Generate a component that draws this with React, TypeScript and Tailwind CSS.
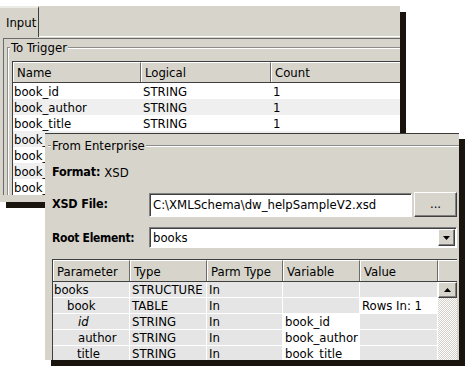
import React from "react";

const raised =
  "border border-t-white border-l-white border-r-[#404040] border-b-[#404040] shadow-[inset_-1px_-1px_0_#808080]";
const sunken =
  "border border-t-[#808080] border-l-[#808080] border-r-white border-b-white shadow-[inset_1px_1px_0_#404040]";

function BackWindow() {
  const rows = [
    ["book_id", "STRING", "1"],
    ["book_author", "STRING", "1"],
    ["book_title", "STRING", "1"],
    ["book_", "", ""],
    ["book_", "", ""],
    ["book_", "", ""],
    ["book_", "", ""],
  ];
  return (
    <div className="absolute left-0 top-[6px] w-[400px] h-[196px] bg-[#d7d4cb] shadow-[6px_6px_0_#1a140e]">
      <div className="w-[400px] h-[196px] overflow-hidden">
        {/* tab strip */}
        <div className="flex h-[31px]">
          <div className="w-[39px] h-[31px] border-t-2 border-t-[#ecebe6] border-r border-r-[#404040] pl-[6px] pt-[8px]">
            Input
          </div>
          <div className="flex-1 border-b border-white" />
        </div>
        {/* tab panel */}
        <div className="ml-[3px] mt-[1px] border-t border-l border-[#6a6a6a]">
          {/* group box */}
          <div className="relative ml-[3px] mt-[8px] border-t border-l border-[#8c8c8c] shadow-[inset_1px_1px_0_#ffffff]">
            <div className="absolute left-[2px] top-[-7px] bg-[#d7d4cb] px-[1px] leading-[14px]">
              To Trigger
            </div>
            <div className="ml-[4px] mt-[13px] border-l border-t border-[#404040]">
              {/* header */}
              <div className="flex h-[21px] border-b border-[#404040]">
                <div className="w-[128px] pl-[3px] flex items-center border-t border-l border-white border-r border-r-[#6b6b6b]">
                  Name
                </div>
                <div className="w-[130px] pl-[3px] flex items-center border-t border-l border-white border-r border-r-[#6b6b6b]">
                  Logical
                </div>
                <div className="flex-1 pl-[3px] flex items-center border-t border-l border-white">
                  Count
                </div>
              </div>
              {rows.map((r, i) => (
                <div
                  key={i}
                  className={`flex h-[16px] items-center ${i % 2 === 1 ? "bg-[#efefef]" : "bg-white"}`}
                >
                  <div className="w-[128px] pl-[1px]">{r[0]}</div>
                  <div className="w-[130px] pl-[2px]">{r[1]}</div>
                  <div className="flex-1 pl-[2px]">{r[2]}</div>
                </div>
              ))}
            </div>
          </div>
        </div>
      </div>
    </div>
  );
}

type Cell = { text: string; white?: boolean; italic?: boolean; indent?: number };

function FrontWindow() {
  const widths = ["w-[77px]", "w-[77px]", "w-[76px]", "w-[77px]", "w-[78px]"];
  const headers = ["Parameter", "Type", "Parm Type", "Variable", "Value"];
  const rows: Cell[][] = [
    [{ text: "books", indent: 0 }, { text: "STRUCTURE" }, { text: "In" }, { text: "" }, { text: "" }],
    [{ text: "book", indent: 14 }, { text: "TABLE" }, { text: "In" }, { text: "" }, { text: "Rows In: 1", white: true }],
    [{ text: "id", indent: 25, italic: true }, { text: "STRING" }, { text: "In" }, { text: "book_id", white: true }, { text: "" }],
    [{ text: "author", indent: 25 }, { text: "STRING" }, { text: "In" }, { text: "book_author", white: true }, { text: "" }],
    [{ text: "title", indent: 24 }, { text: "STRING" }, { text: "In" }, { text: "book_title", white: true }, { text: "" }],
  ];
  const indentCls: Record<number, string> = {
    0: "pl-[1px]",
    14: "pl-[14px]",
    24: "pl-[24px]",
    25: "pl-[25px]",
  };
  return (
    <div className="absolute left-[45px] top-[133px] w-[414px] h-[227px] bg-[#d7d4cb] shadow-[6px_6px_0_#1a140e]">
      <div className="w-[414px] h-[227px] overflow-hidden border-t border-[#3a3a3a]">
        {/* group title */}
        <div className="relative ml-[3px] mt-[11px] border-t border-[#8c8c8c] shadow-[0_1px_0_#ffffff]">
          <div className="absolute left-[3px] top-[-7px] bg-[#d7d4cb] px-[1px] leading-[14px]">
            From Enterprise
          </div>
        </div>
        <div className="pl-[7px]">
          <div className="mt-[19px] h-[14px] flex items-center">
            <span className="font-bold text-[12.5px] tracking-[-0.2px]">Format:</span>
            <span className="ml-[4px]">XSD</span>
          </div>
          <div className="mt-[13px] flex items-center h-[25px]">
            <div className="w-[97px] font-bold text-[12.5px] tracking-[-0.2px]">XSD File:</div>
            <div className={`w-[263px] h-[24px] bg-white flex items-center pl-[3px] ${sunken}`}>
              C:\XMLSchema\dw_helpSampleV2.xsd
            </div>
            <div className={`ml-[2px] w-[43px] h-[25px] bg-[#d7d4cb] flex items-center justify-center pb-[2px] ${raised}`}>
              ...
            </div>
          </div>
          <div className="mt-[10px] flex items-center h-[21px]">
            <div className="w-[97px] font-bold text-[12px] tracking-[-0.3px]">Root Element:</div>
            <div className={`w-[308px] h-[21px] bg-white flex items-center ${sunken}`}>
              <div className="flex-1 pl-[3px]">books</div>
              <div className={`w-[17px] h-[17px] mr-[1px] bg-[#d7d4cb] flex items-center justify-center ${raised}`}>
                <svg width="7" height="4" viewBox="0 0 7 4">
                  <path d="M0 0H7L3.5 4Z" fill="#000" />
                </svg>
              </div>
            </div>
          </div>
          {/* parameter table */}
          <div className="mt-[11px] w-[405px] border-t border-l border-[#404040]">
            <div className="flex h-[22px] border-b border-[#404040]">
              {headers.map((h, i) => (
                <div
                  key={h}
                  className={`${widths[i]} flex items-center pl-[3px] border-t border-l border-white border-r border-r-[#6b6b6b]`}
                >
                  {h}
                </div>
              ))}
              <div className="flex-1 border-t border-l border-white" />
            </div>
            <div className="flex">
              <div>
                {rows.map((r, ri) => (
                  <div key={ri} className="flex h-[16px]">
                    {r.map((c, ci) => (
                      <div
                        key={ci}
                        className={`${widths[ci]} flex items-center border-r border-b border-white ${
                          c.white ? "bg-white" : "bg-[#e5e5e5]"
                        } ${ci === 0 ? indentCls[c.indent ?? 0] : "pl-[2px]"} ${c.italic ? "italic" : ""}`}
                      >
                        {c.text}
                      </div>
                    ))}
                  </div>
                ))}
              </div>
              <div className="w-[19px] flex flex-col">
                <div className={`h-[16px] bg-[#d7d4cb] flex items-center justify-center ${raised}`}>
                  <svg width="7" height="4" viewBox="0 0 7 4">
                    <path d="M0 4H7L3.5 0Z" fill="#000" />
                  </svg>
                </div>
                <div className="flex-1 bg-[repeating-conic-gradient(#d4d0c8_0_25%,#ffffff_0_50%)] bg-[length:2px_2px]" />
              </div>
            </div>
          </div>
        </div>
      </div>
    </div>
  );
}

export default function App() {
  return (
    <div className="relative w-[467px] h-[369px] bg-white overflow-hidden font-['DejaVu_Sans_Condensed','DejaVu_Sans',sans-serif] text-[13px] leading-none text-black">
      <BackWindow />
      <FrontWindow />
    </div>
  );
}
